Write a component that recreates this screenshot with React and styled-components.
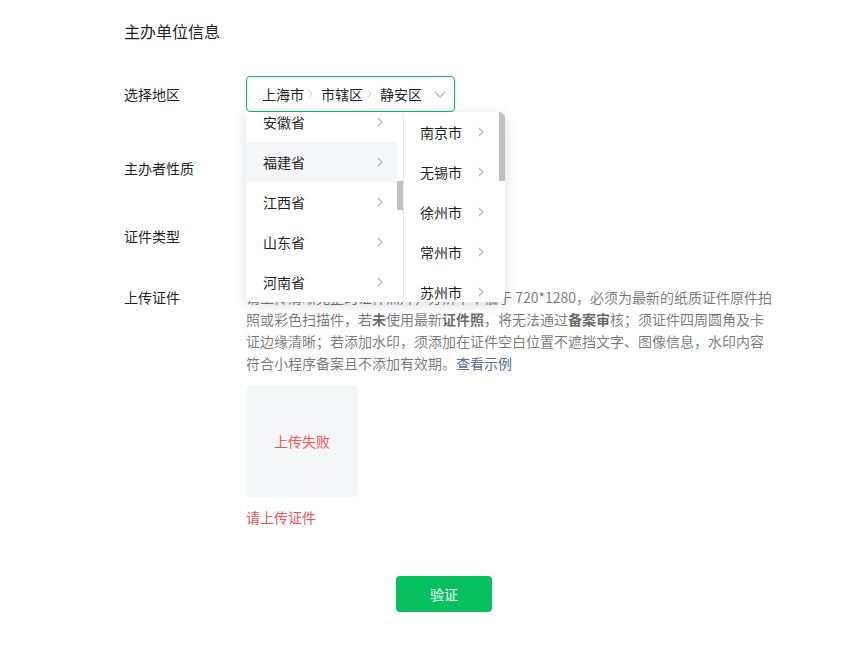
import React from "react";
import styled, { createGlobalStyle } from "styled-components";

const GlobalStyle = createGlobalStyle`
  body {
    margin: 0;
    background: #ffffff;
    font-family: "Noto Sans CJK SC", "Noto Sans", sans-serif;
    color: rgba(0, 0, 0, 0.9);
  }
`

const Page = styled.div`
  width: 640px;
  padding: 20px 0 0 124px;
`

const Title = styled.h2`
  margin: 0;
  font-size: 16px;
  font-weight: 400;
  line-height: 22px;
`

const Row = styled.div`
  display: flex;
  align-items: flex-start;
  margin-top: ${p => p.$top}px;
`

const Label = styled.div`
  width: 122px;
  flex-shrink: 0;
  font-size: 14px;
  line-height: ${p => p.$lh || 36}px;
`

const Field = styled.div`
  position: relative;
  flex: 1;
`

const SelectBox = styled.div`
  box-sizing: border-box;
  width: 209px;
  height: 36px;
  display: flex;
  align-items: center;
  padding: 0 8px 0 15px;
  border: 1px solid ${p => (p.$active ? "#07c160" : "#e5e5e5")};
  border-radius: 4px;
  font-size: 14px;
`

const Crumb = styled.span`
  display: flex;
  align-items: center;
  gap: 4px;
  margin-right: 8px;
`

const Arrow = styled.span`
  margin-left: auto;
  display: flex;
  align-items: center;
`

const Dropdown = styled.div`
  position: absolute;
  top: 36px;
  left: 0;
  z-index: 10;
  width: 259px;
  height: 190px;
  display: flex;
  background: #fff;
  border-radius: 0 6px 6px 6px;
  box-shadow: 0 3px 14px rgba(0, 0, 0, 0.14);
  overflow: hidden;
`

const Column = styled.div`
  position: relative;
  width: ${p => p.$w}px;
  overflow: hidden;
  border-right: ${p => (p.$divider ? "1px solid #e7e7e7" : "none")};
`

const List = styled.div`
  width: ${p => p.$w}px;
  margin-top: ${p => p.$scroll}px;
`

const Item = styled.div`
  height: 40px;
  display: flex;
  align-items: center;
  justify-content: space-between;
  padding: 0 ${p => p.$pr}px 0 ${p => p.$pl}px;
  font-size: 14px;
  background: ${p => (p.$selected ? "#f5f6f7" : "transparent")};
`

const Thumb = styled.div`
  position: absolute;
  right: 0;
  top: ${p => p.$top}px;
  width: 6px;
  height: ${p => p.$h}px;
  background: #c1c1c1;
`

const Desc = styled.div`
  width: 524px;
  font-size: 14px;
  line-height: 22px;
  white-space: nowrap;
  color: rgba(0, 0, 0, 0.55);

  b {
    font-weight: 600;
    color: rgba(0, 0, 0, 0.6);
  }
`

const Link = styled.span`
  color: #576b95;
`

const Upload = styled.div`
  width: 112px;
  height: 112px;
  margin-top: 11px;
  display: flex;
  align-items: center;
  justify-content: center;
  background: #f5f6f7;
  border-radius: 4px;
  font-size: 14px;
  color: #fa5151;
`

const ErrorTip = styled.div`
  margin-top: 9px;
  font-size: 14px;
  line-height: 22px;
  color: #fa5151;
`

const Footer = styled.div`
  display: flex;
  justify-content: center;
  margin-top: 48px;
`

const Button = styled.button`
  width: 96px;
  height: 36px;
  border: none;
  border-radius: 4px;
  background: #07c160;
  color: #fff;
  font-family: inherit;
  font-size: 14px;
  cursor: pointer;
`

const Chevron = ({ w = 6, h = 10, color = "#b2b2b2" }) => (
  <svg width={w} height={h} viewBox="0 0 6 10">
    <polyline points="1,1 5,5 1,9" fill="none" stroke={color} strokeWidth="1.1" />
  </svg>
)

const ChevronDown = () => (
  <svg width="12" height="7" viewBox="0 0 12 7">
    <polyline points="1,1 6,6 11,1" fill="none" stroke="#b2b2b2" strokeWidth="1.1" />
  </svg>
)

const provinces = ["安徽省", "福建省", "江西省", "山东省", "河南省"]
const cities = ["南京市", "无锡市", "徐州市", "常州市", "苏州市"]

function App() {
  return (
    <Page>
      <GlobalStyle />
      <Title>主办单位信息</Title>

      <Row $top={34}>
        <Label>选择地区</Label>
        <Field>
          <SelectBox $active>
            <Crumb>上海市<Chevron w={5} h={8} color="#c4c4c4" /></Crumb>
            <Crumb>市辖区<Chevron w={5} h={8} color="#c4c4c4" /></Crumb>
            <Crumb>静安区</Crumb>
            <Arrow><ChevronDown /></Arrow>
          </SelectBox>

          <Dropdown>
            <Column $w={157} $divider>
              <List $w={151} $scroll={-10}>
                {provinces.map(p => (
                  <Item key={p} $pl={17} $pr={14} $selected={p === "福建省"}>
                    {p}
                    <Chevron />
                  </Item>
                ))}
              </List>
              <Thumb $top={69} $h={29} />
            </Column>
            <Column $w={101}>
              <List $w={95} $scroll={0}>
                {cities.map(c => (
                  <Item key={c} $pl={16} $pr={15}>
                    {c}
                    <Chevron />
                  </Item>
                ))}
              </List>
              <Thumb $top={0} $h={69} />
            </Column>
          </Dropdown>
        </Field>
      </Row>

      <Row $top={38}>
        <Label>主办者性质</Label>
        <Field>
          <SelectBox />
        </Field>
      </Row>

      <Row $top={32}>
        <Label>证件类型</Label>
        <Field>
          <SelectBox />
        </Field>
      </Row>

      <Row $top={32}>
        <Label $lh={22}>上传证件</Label>
        <Field>
          <Desc>
            请上传清晰完整的证件照片，分辨率不低于 720*1280，必须为最新的纸质证件原件拍<br />
            照或彩色扫描件，若<b>未</b>使用最新<b>证件照</b>，将无法通过<b>备案审</b>核；须证件四周圆角及卡<br />
            证边缘清晰；若添加水印，须添加在证件空白位置不遮挡文字、图像信息，水印内容<br />
            符合小程序备案且不添加有效期。<Link>查看示例</Link>
          </Desc>
          <Upload>上传失败</Upload>
          <ErrorTip>请上传证件</ErrorTip>
        </Field>
      </Row>

      <Footer>
        <Button>验证</Button>
      </Footer>
    </Page>
  )
}

export default App;
